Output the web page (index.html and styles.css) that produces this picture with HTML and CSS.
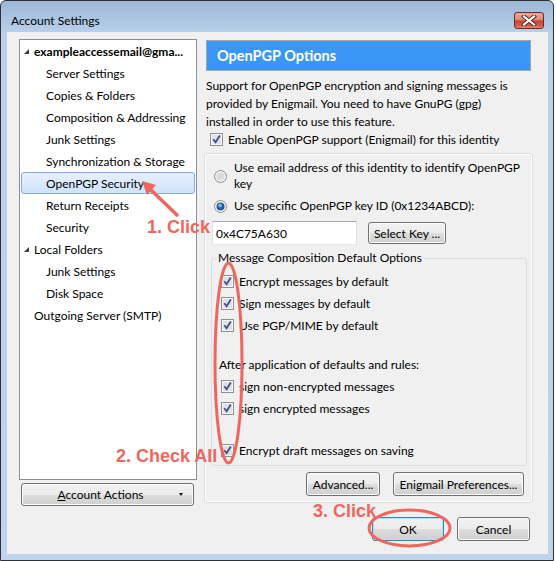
FILE: index.html
```html
<!DOCTYPE html>
<html>
<head>
<meta charset="utf-8">
<title>Account Settings</title>
<link rel="stylesheet" href="styles.css">
</head>
<body>
<div class="window">
  <div class="titlebar">
    <span class="title">Account Settings</span>
    <span class="close"><svg width="16" height="11" viewBox="0 0 16 11"><path d="M3 1.5 L13 9.5 M13 1.5 L3 9.5" stroke="#5b1d15" stroke-width="4" stroke-linecap="square"/><path d="M3 1.5 L13 9.5 M13 1.5 L3 9.5" stroke="#fff" stroke-width="2.2" stroke-linecap="square"/></svg></span>
  </div>
  <div class="client">
    <div class="main">
      <div class="leftcol">
        <div class="tree">
          <div class="item top"><span class="twisty"></span><b>exampleaccessemail@gma...</b></div>
          <div class="item child">Server Settings</div>
          <div class="item child">Copies &amp; Folders</div>
          <div class="item child">Composition &amp; Addressing</div>
          <div class="item child">Junk Settings</div>
          <div class="item child">Synchronization &amp; Storage</div>
          <div class="item child sel">OpenPGP Security</div>
          <div class="item child">Return Receipts</div>
          <div class="item child">Security</div>
          <div class="item top"><span class="twisty"></span>Local Folders</div>
          <div class="item child">Junk Settings</div>
          <div class="item child">Disk Space</div>
          <div class="item leaf">Outgoing Server (SMTP)</div>
        </div>
        <div class="btn actions"><span class="label"><u>A</u>ccount Actions</span><span class="drop"></span></div>
      </div>
      <div class="rightcol">
        <div class="header">OpenPGP Options</div>
        <p class="desc">Support for OpenPGP encryption and signing messages is<br>provided by Enigmail. You need to have GnuPG (gpg)<br>installed in order to use this feature.</p>
        <div class="enable">
          <svg class="cb" width="13" height="13" viewBox="0 0 13 13"><rect x="0.5" y="0.5" width="12" height="12" fill="#f7f7f7" stroke="#8e8f8f"/><rect x="2" y="2" width="9" height="9" fill="#dfe1e4"/><path d="M3.3 6.3 L5.6 9.2 L9.8 2.6" fill="none" stroke="#3c4f8a" stroke-width="1.8"/></svg>
          <span>Enable OpenPGP support (Enigmail) for this identity</span>
        </div>
        <div class="panel">
          <div class="radio r1">
            <svg class="rb" width="13" height="13" viewBox="0 0 13 13"><circle cx="6.5" cy="6.5" r="6" fill="#f2f2f2" stroke="#8e8f8f"/><circle cx="6.5" cy="6.5" r="4" fill="#dadcdf"/></svg>
            <span>Use email address of this identity to identify OpenPGP<br>key</span>
          </div>
          <div class="radio r2">
            <svg class="rb" width="13" height="13" viewBox="0 0 13 13"><circle cx="6.5" cy="6.5" r="6" fill="#f2f2f2" stroke="#8e8f8f"/><circle cx="6.5" cy="6.5" r="4" fill="#1d5d9d"/><circle cx="6" cy="5.6" r="2" fill="#6fb2e8"/></svg>
            <span>Use specific OpenPGP key ID (0x1234ABCD):</span>
          </div>
          <div class="keyrow">
            <div class="input">0x4C75A630</div>
            <div class="btn selkey">Select Key ...</div>
          </div>
          <fieldset class="group">
            <legend>Message Composition Default Options</legend>
            <div class="gcheck first">
              <svg class="cb" width="13" height="13" viewBox="0 0 13 13"><rect x="0.5" y="0.5" width="12" height="12" fill="#f7f7f7" stroke="#8e8f8f"/><rect x="2" y="2" width="9" height="9" fill="#dfe1e4"/><path d="M3.3 6.3 L5.6 9.2 L9.8 2.6" fill="none" stroke="#3c4f8a" stroke-width="1.8"/></svg>
              <span>Encrypt messages by default</span>
            </div>
            <div class="gcheck">
              <svg class="cb" width="13" height="13" viewBox="0 0 13 13"><rect x="0.5" y="0.5" width="12" height="12" fill="#f7f7f7" stroke="#8e8f8f"/><rect x="2" y="2" width="9" height="9" fill="#dfe1e4"/><path d="M3.3 6.3 L5.6 9.2 L9.8 2.6" fill="none" stroke="#3c4f8a" stroke-width="1.8"/></svg>
              <span>Sign messages by default</span>
            </div>
            <div class="gcheck">
              <svg class="cb" width="13" height="13" viewBox="0 0 13 13"><rect x="0.5" y="0.5" width="12" height="12" fill="#f7f7f7" stroke="#8e8f8f"/><rect x="2" y="2" width="9" height="9" fill="#dfe1e4"/><path d="M3.3 6.3 L5.6 9.2 L9.8 2.6" fill="none" stroke="#3c4f8a" stroke-width="1.8"/></svg>
              <span>Use PGP/MIME by default</span>
            </div>
            <div class="after">After application of defaults and rules:</div>
            <div class="gcheck s1">
              <svg class="cb" width="13" height="13" viewBox="0 0 13 13"><rect x="0.5" y="0.5" width="12" height="12" fill="#f7f7f7" stroke="#8e8f8f"/><rect x="2" y="2" width="9" height="9" fill="#dfe1e4"/><path d="M3.3 6.3 L5.6 9.2 L9.8 2.6" fill="none" stroke="#3c4f8a" stroke-width="1.8"/></svg>
              <span>sign non-encrypted messages</span>
            </div>
            <div class="gcheck">
              <svg class="cb" width="13" height="13" viewBox="0 0 13 13"><rect x="0.5" y="0.5" width="12" height="12" fill="#f7f7f7" stroke="#8e8f8f"/><rect x="2" y="2" width="9" height="9" fill="#dfe1e4"/><path d="M3.3 6.3 L5.6 9.2 L9.8 2.6" fill="none" stroke="#3c4f8a" stroke-width="1.8"/></svg>
              <span>sign encrypted messages</span>
            </div>
            <div class="gcheck draft">
              <svg class="cb" width="13" height="13" viewBox="0 0 13 13"><rect x="0.5" y="0.5" width="12" height="12" fill="#f7f7f7" stroke="#8e8f8f"/><rect x="2" y="2" width="9" height="9" fill="#dfe1e4"/><path d="M3.3 6.3 L5.6 9.2 L9.8 2.6" fill="none" stroke="#3c4f8a" stroke-width="1.8"/></svg>
              <span>Encrypt draft messages on saving</span>
            </div>
          </fieldset>
          <div class="btnrow">
            <div class="btn adv">Advanced...</div>
            <div class="btn pref">Enigmail Preferences...</div>
          </div>
        </div>
      </div>
    </div>
    <div class="bottomrow">
      <div class="btn ok">OK</div>
      <div class="btn cancel">Cancel</div>
    </div>
  </div>
</div>
<svg class="overlay" width="556" height="561" viewBox="0 0 556 561">
  <line x1="177" y1="215" x2="150" y2="189" stroke="#f0665c" stroke-width="3.5" stroke-linecap="round"/>
  <polygon points="142,181 156,185 147,195" fill="#f0665c"/>
  <ellipse cx="228.5" cy="363" rx="13.5" ry="100" fill="none" stroke="#f0665c" stroke-width="3"/>
  <ellipse cx="409.5" cy="528" rx="40.5" ry="18" fill="none" stroke="#f0665c" stroke-width="3"/>
</svg>
<div class="note n1">1. Click</div>
<div class="note n2">2. Check All</div>
<div class="note n3">3. Click</div>
</body>
</html>
```

FILE: styles.css
```css
body {
  margin: 0;
  position: relative;
  width: 556px;
  height: 561px;
  overflow: hidden;
  background: #fff;
  font-family: Lato, "Open Sans", sans-serif;
  font-size: 12px;
  color: #000;
}

.window {
  box-sizing: border-box;
  width: 554px;
  height: 561px;
  border: 1px solid #2e3033;
  border-radius: 6px 6px 0 0;
  padding: 0 5px 6px 6px;
  background: linear-gradient(#9cb8d7, #b9d0e9 32px, #bdd4ec);
  display: flex;
  flex-direction: column;
}

.titlebar {
  height: 31px;
  flex: none;
  display: flex;
  justify-content: space-between;
  align-items: flex-start;
  padding: 0 4px;
}

.title {
  margin-top: 12px;
  line-height: 16px;
}

.close {
  margin-top: 11px;
  box-sizing: border-box;
  width: 30px;
  height: 17px;
  border: 1px solid #6e2a22;
  border-radius: 3px;
  background: linear-gradient(#eaaa9b, #d98a78 45%, #c7482f 52%, #cf5f49 85%, #e08f7b);
  display: flex;
  align-items: center;
  justify-content: center;
}

.client {
  flex: 1;
  background: #f0f0f0;
  padding: 7px 15px 0 12px;
  display: flex;
  flex-direction: column;
}

.main {
  display: flex;
  gap: 7px;
}

.leftcol {
  width: 178px;
  display: flex;
  flex-direction: column;
  gap: 3px;
}

.tree {
  box-sizing: border-box;
  height: 441px;
  background: #fff;
  border: 1px solid #8a8f97;
}

.item {
  box-sizing: border-box;
  height: 22px;
  margin: 0 1px;
  border: 1px solid transparent;
  border-radius: 3px;
  display: flex;
  align-items: center;
  white-space: nowrap;
}

.child { padding-left: 24px; }
.top { padding-left: 2px; }
.leaf { padding-left: 12px; }

.twisty {
  width: 0;
  height: 0;
  border-left: 5px solid transparent;
  border-bottom: 5px solid #3a3a3a;
  margin-right: 5px;
}

.sel {
  background: linear-gradient(#e6f0fd, #d0e3fb);
  border-color: #84acdd;
}

.btn {
  box-sizing: border-box;
  height: 24px;
  border: 1px solid #707070;
  border-radius: 3px;
  background: linear-gradient(#f2f2f2 0%, #ebebeb 50%, #dddddd 51%, #cfcfcf 100%);
  box-shadow: inset 0 0 0 1px #fbfbfb;
  display: flex;
  align-items: center;
  justify-content: center;
  white-space: nowrap;
}

.actions {
  height: 23px;
  margin: 0 3px 0 2px;
  justify-content: space-between;
  padding: 0 10px 0 0;
}

.actions .label {
  flex: 1;
  text-align: center;
}

.drop {
  width: 0;
  height: 0;
  border-left: 2.5px solid transparent;
  border-right: 2.5px solid transparent;
  border-top: 3px solid #111;
}

.rightcol {
  width: 329px;
  display: flex;
  flex-direction: column;
}

.header {
  box-sizing: border-box;
  height: 31px;
  margin: 1px 2px 0;
  background: #3a97f6;
  border: 1px solid #a0a7b0;
  color: #fff;
  font-weight: bold;
  font-size: 14.5px;
  padding-left: 10px;
  display: flex;
  align-items: center;
}

.desc {
  margin: 6px 0 0 2px;
  line-height: 18px;
}

.enable {
  height: 17px;
  display: flex;
  align-items: center;
  gap: 5px;
  padding-left: 6px;
}

.cb, .rb {
  flex: none;
  display: block;
}

.panel {
  box-sizing: border-box;
  height: 350px;
  margin-top: 5px;
  border: 1px solid #d5dfe5;
  border-radius: 3px;
  box-shadow: inset 0 0 0 1px #fff;
  padding: 6px 5px 6px 6px;
  display: flex;
  flex-direction: column;
}

.radio {
  display: flex;
  align-items: center;
  gap: 7px;
  margin-left: 3px;
  line-height: 16px;
}

.r1 { height: 32px; }
.r2 { height: 16px; margin-top: 6px; }

.keyrow {
  height: 24px;
  margin: 7px 0 0 1px;
  display: flex;
  align-items: center;
  gap: 11px;
}

.input {
  box-sizing: border-box;
  width: 145px;
  height: 24px;
  background: #fff;
  border: 1px solid #abadb3;
  border-color: #abadb3 #dbdfe6 #e3e9ef #e2e3ea;
  padding-left: 3px;
  display: flex;
  align-items: center;
}

.selkey {
  width: 78px;
  height: 22px;
}

.group {
  margin: 5px 0 0;
  padding: 0 0 4px;
  border: 1px solid #d5dfe5;
  border-radius: 3px;
  min-width: 0;
}

.group legend {
  margin-left: 4px;
  padding: 0 2px;
  line-height: 16px;
}

.gcheck {
  height: 22px;
  display: flex;
  align-items: center;
  gap: 5px;
  padding-left: 9px;
}

.gcheck.first { margin-top: 4px; }
.gcheck.s1 { margin-top: 2px; }
.gcheck.draft { margin-top: 20px; }

.after {
  margin-top: 21px;
  line-height: 16px;
  padding-left: 7px;
}

.btnrow {
  margin-top: 6px;
  display: flex;
  justify-content: flex-end;
  gap: 13px;
  padding-right: 3px;
}

.adv { width: 74px; }
.pref { width: 131px; }

.bottomrow {
  margin-top: 11px;
  display: flex;
  justify-content: flex-end;
  gap: 13px;
  padding-right: 3px;
}

.ok {
  width: 72px;
  border-color: #3c7fb1;
  box-shadow: inset 0 0 0 1px #b8e0f5;
}

.cancel { width: 73px; }

.overlay {
  position: absolute;
  left: 0;
  top: 0;
  pointer-events: none;
}

.note {
  position: absolute;
  font-family: "Liberation Sans", Arial, sans-serif;
  font-weight: bold;
  font-size: 18px;
  line-height: 18px;
  color: #f0665c;
  white-space: nowrap;
}

.n1 { left: 147px; top: 218px; }
.n2 { left: 116px; top: 447px; }
.n3 { left: 313px; top: 502px; }
```
